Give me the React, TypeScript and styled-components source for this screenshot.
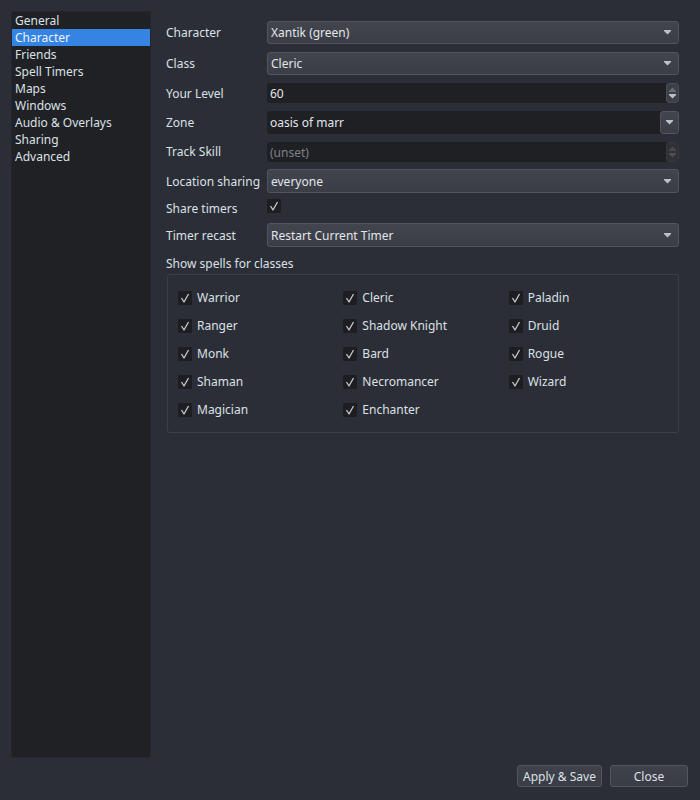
import React from "react";
import styled, { createGlobalStyle } from "styled-components";

// ---------- Data ----------
const pages = [
  "General",
  "Character",
  "Friends",
  "Spell Timers",
  "Maps",
  "Windows",
  "Audio & Overlays",
  "Sharing",
  "Advanced",
];

const classes = [
  "Warrior",
  "Cleric",
  "Paladin",
  "Ranger",
  "Shadow Knight",
  "Druid",
  "Monk",
  "Bard",
  "Rogue",
  "Shaman",
  "Necromancer",
  "Wizard",
  "Magician",
  "Enchanter",
];

// ---------- Styled Components ----------
const GlobalStyle = createGlobalStyle`
  html, body {
    margin: 0;
    padding: 0;
    background: #2b2e36;
  }
  body {
    font-family: "Noto Sans", "Open Sans", sans-serif;
    font-size: 12px;
    color: #dbe0e6;
  }
`;

const Page = styled.div`
  height: 800px;
  box-sizing: border-box;
  padding: 11px 12px 13px 11px;
  display: flex;
  flex-direction: column;
  gap: 7px;
`;

const Main = styled.div`
  flex: 1;
  display: flex;
  min-height: 0;
`;

const Sidebar = styled.ul`
  width: 140px;
  box-sizing: border-box;
  margin: 0;
  padding: 0;
  list-style: none;
  background: #202125;
  border: 1px solid #25272c;
`;

const NavItem = styled.li<{ $active?: boolean }>`
  height: 17px;
  line-height: 17px;
  padding-left: 3px;
  background: ${(p) => (p.$active ? "#3584e4" : "transparent")};
  color: ${(p) => (p.$active ? "#eef3fa" : "#dbe0e6")};
  white-space: nowrap;
`;

const Content = styled.div`
  flex: 1;
  padding: 10px 9px 0 15px;
  display: flex;
  flex-direction: column;
`;

const Form = styled.div`
  display: grid;
  grid-template-columns: 101px 1fr;
  grid-template-rows: 23px 23px 20px 23px 19px 24px 14px 24px;
  row-gap: 8px;
  align-items: center;
`;

const Label = styled.div`
  line-height: 17px;
  white-space: nowrap;
`;

const Combo = styled.div`
  height: 100%;
  box-sizing: border-box;
  display: flex;
  align-items: center;
  padding: 0 7px 0 3px;
  border: 1px solid #52555c;
  border-radius: 3px;
  background: linear-gradient(#42454d, #3a3d45);
  color: #e2e6ea;
`;

const ComboText = styled.span`
  flex: 1;
`;

const Field = styled.div<{ $disabled?: boolean }>`
  height: 100%;
  min-height: 20px;
  align-self: start;
  box-sizing: border-box;
  display: flex;
  align-items: center;
  padding-left: 3px;
  border-radius: 3px;
  background: #1f2024;
  color: ${(p) => (p.$disabled ? "#7c8087" : "#e2e6ea")};
`;

const FieldText = styled.span`
  flex: 1;
`;

const SpinButtons = styled.div<{ $disabled?: boolean }>`
  width: 13px;
  height: 100%;
  box-sizing: border-box;
  display: flex;
  flex-direction: column;
  align-items: center;
  justify-content: center;
  gap: 2px;
  background: #3c3f46;
  border: 1px solid #4a4d54;
  border-radius: 3px;
  opacity: ${(p) => (p.$disabled ? 0.55 : 1)};
`;

const DropButton = styled.div`
  width: 19px;
  height: 100%;
  box-sizing: border-box;
  display: flex;
  align-items: center;
  justify-content: center;
  background: linear-gradient(#42454d, #3a3d45);
  border: 1px solid #52555c;
  border-radius: 3px;
`;

const CheckBox = styled.span`
  width: 14px;
  height: 14px;
  flex: none;
  display: inline-flex;
  align-items: center;
  justify-content: center;
  background: #1d1e22;
  border-radius: 1px;
`;

const SectionLabel = styled.div`
  margin-top: 8px;
  line-height: 17px;
`;

const Group = styled.div`
  margin-top: 2px;
  margin-left: 1px;
  border: 1px solid #3c3f46;
  border-radius: 3px;
  padding: 14px 4px 14px 10px;
  display: grid;
  grid-template-columns: repeat(3, 1fr);
  row-gap: 11px;
`;

const CheckItem = styled.label`
  display: flex;
  align-items: center;
  gap: 5px;
  height: 17px;
  white-space: nowrap;
`;

const Footer = styled.div`
  display: flex;
  justify-content: flex-end;
  gap: 8px;
`;

const Button = styled.button<{ $width: number }>`
  width: ${(p) => p.$width}px;
  height: 22px;
  padding: 0;
  font-family: inherit;
  font-size: 12px;
  color: #dbe0e6;
  background: linear-gradient(#3f424a, #393c44);
  border: 1px solid #53565d;
  border-radius: 3px;
`;

// ---------- Icons ----------
const Arrow = ({ dim }: { dim?: boolean }) => (
  <svg width="7" height="5" viewBox="0 0 7 5">
    <path d="M0 0 H7 V1 L3.5 4.5 L0 1 Z" fill={dim ? "#73767d" : "#bdc0c5"} />
  </svg>
);

const UpArrow = ({ dim }: { dim?: boolean }) => (
  <svg width="7" height="5" viewBox="0 0 7 5">
    <path d="M0 5 H7 V4 L3.5 0.5 L0 4 Z" fill={dim ? "#686b72" : "#bdc0c5"} />
  </svg>
);

const Check = () => (
  <svg width="14" height="14" viewBox="0 0 14 14">
    <path
      d="M3.5 7 L6 11 L10.5 3"
      fill="none"
      stroke="#c6c9ce"
      strokeWidth="1.3"
      strokeLinejoin="round"
    />
  </svg>
);

// ---------- Component ----------
const SelectBox = ({ value }: { value: string }) => (
  <Combo>
    <ComboText>{value}</ComboText>
    <Arrow />
  </Combo>
);

const App: React.FC = () => {
  return (
    <>
      <GlobalStyle />
      <Page>
        <Main>
          <Sidebar>
            {pages.map((p) => (
              <NavItem key={p} $active={p === "Character"}>
                {p}
              </NavItem>
            ))}
          </Sidebar>
          <Content>
            <Form>
              <Label>Character</Label>
              <SelectBox value="Xantik (green)" />

              <Label>Class</Label>
              <SelectBox value="Cleric" />

              <Label>Your Level</Label>
              <Field>
                <FieldText>60</FieldText>
                <SpinButtons>
                  <UpArrow dim />
                  <Arrow />
                </SpinButtons>
              </Field>

              <Label>Zone</Label>
              <Field>
                <FieldText>oasis of marr</FieldText>
                <DropButton>
                  <Arrow />
                </DropButton>
              </Field>

              <Label>Track Skill</Label>
              <Field $disabled>
                <FieldText>(unset)</FieldText>
                <SpinButtons $disabled>
                  <UpArrow dim />
                  <Arrow dim />
                </SpinButtons>
              </Field>

              <Label>Location sharing</Label>
              <SelectBox value="everyone" />

              <Label>Share timers</Label>
              <div>
                <CheckBox>
                  <Check />
                </CheckBox>
              </div>

              <Label>Timer recast</Label>
              <SelectBox value="Restart Current Timer" />
            </Form>

            <SectionLabel>Show spells for classes</SectionLabel>
            <Group>
              {classes.map((c) => (
                <CheckItem key={c}>
                  <CheckBox>
                    <Check />
                  </CheckBox>
                  {c}
                </CheckItem>
              ))}
            </Group>
          </Content>
        </Main>
        <Footer>
          <Button $width={85}>Apply &amp; Save</Button>
          <Button $width={78}>Close</Button>
        </Footer>
      </Page>
    </>
  );
};

export default App;
